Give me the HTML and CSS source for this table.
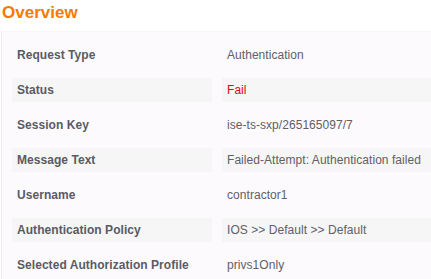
FILE: index.html
```html
<!DOCTYPE html>
<html>
<head>
<meta charset="utf-8">
<link rel="stylesheet" href="styles.css">
</head>
<body>
<h2 class="title">Overview</h2>
<div class="panel">
  <table class="details">
    <tr><th>Request Type</th><td>Authentication</td></tr>
    <tr class="alt"><th>Status</th><td class="fail">Fail</td></tr>
    <tr><th>Session Key</th><td>ise-ts-sxp/265165097/7</td></tr>
    <tr class="alt"><th>Message Text</th><td>Failed-Attempt: Authentication failed</td></tr>
    <tr><th>Username</th><td>contractor1</td></tr>
    <tr class="alt"><th>Authentication Policy</th><td>IOS &gt;&gt; Default &gt;&gt; Default</td></tr>
    <tr><th>Selected Authorization Profile</th><td>privs1Only</td></tr>
  </table>
</div>
</body>
</html>
```
FILE: styles.css
```css
html, body {
  margin: 0;
  padding: 0;
  background: #ffffff;
  font-family: "Liberation Sans", Arial, sans-serif;
  overflow: hidden;
}
.title {
  margin: 0;
  padding: 3px 0 0 2px;
  height: 28px;
  box-sizing: border-box;
  font-size: 17px;
  font-weight: bold;
  color: #f47b00;
  line-height: 20px;
}
.panel {
  margin-left: 1px;
  border-left: 1px solid #ececec;
  border-top: 1px solid #f6f2f6;
  margin-top: 3px;
  background: #fdfafd;
}
.details {
  border-collapse: separate;
  border-spacing: 10px 11px;
  width: calc(100% + 10px);
  font-size: 12px;
  letter-spacing: 0.05px;
}
.details th, .details td {
  height: 24px;
  padding: 0 0 0 5px;
  text-align: left;
  vertical-align: middle;
  box-sizing: border-box;
}
.details th {
  width: 200px;
  font-weight: bold;
  color: #5a5a64;
}
.details td {
  color: #606068;
}
.details tr.alt th, .details tr.alt td {
  background: #f5f6f5;
}
.details td.fail {
  color: #e8001c;
}
```
